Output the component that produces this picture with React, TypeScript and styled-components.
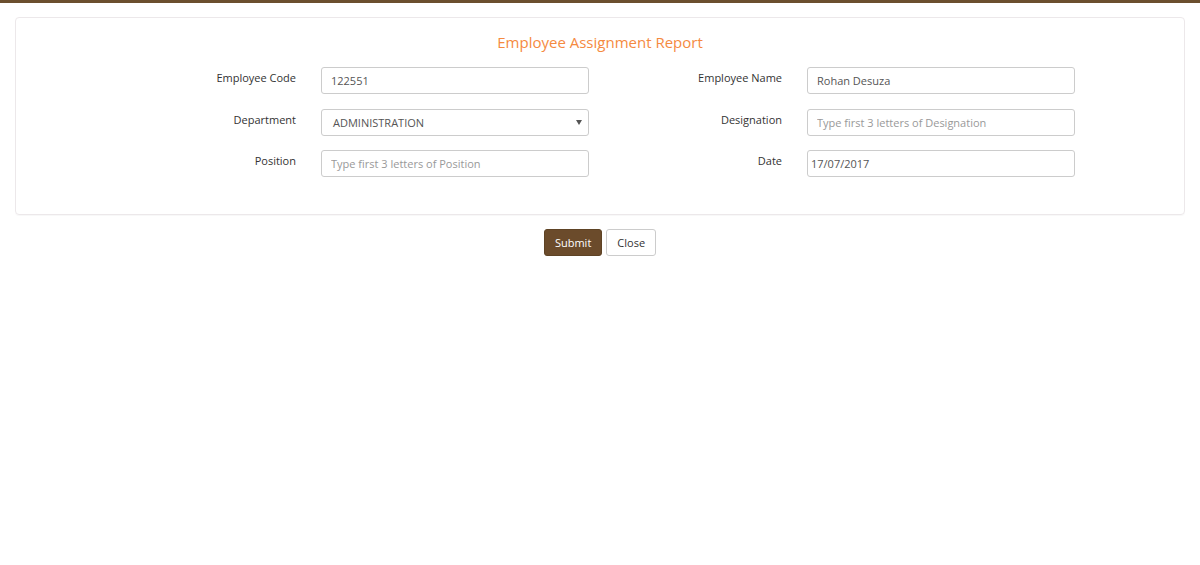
import React from 'react';
import styled, { createGlobalStyle } from 'styled-components';

const GlobalStyle = createGlobalStyle`
  html, body {
    margin: 0;
    padding: 0;
    background: #fff;
    font-family: 'Open Sans', 'Liberation Sans', sans-serif;
    font-size: 11px;
    color: #333;
  }
`;

const TopBar = styled.div`
  height: 3px;
  background-color: #6b4f2e;
`;

const Page = styled.div`
  padding: 14px 15px 0;
`;

const Panel = styled.div`
  border: 1px solid #ece8ea;
  border-radius: 4px;
  box-shadow: 0 1px 1px rgba(0, 0, 0, 0.03);
  padding: 14px 0 37px;
`;

const Title = styled.h3`
  margin: 0 0 15px;
  text-align: center;
  font-size: 15px;
  font-weight: 400;
  line-height: 20px;
  color: #f58a3f;
`;

const FormGrid = styled.div`
  display: grid;
  grid-template-columns: 182px 268px 36px 182px 268px;
  row-gap: 14.5px;
  padding-left: 123px;
`;

const Label = styled.label`
  text-align: right;
  padding: 2px 25px 0 0;
  line-height: 17px;
  color: #333;
`;

const Spacer = styled.div``;

const Input = styled.input<{ $pad?: number }>`
  box-sizing: border-box;
  width: 268px;
  height: 27px;
  padding: 0 ${(p) => p.$pad ?? 9}px;
  border: 1px solid #ccc;
  border-radius: 3px;
  font-family: inherit;
  font-size: 11px;
  color: #555;
  outline: none;
  &::placeholder {
    color: #999;
  }
`;

const SelectBox = styled.div`
  position: relative;
  box-sizing: border-box;
  width: 268px;
  height: 27px;
  border: 1px solid #ccc;
  border-radius: 3px;
  display: flex;
  align-items: center;
  padding: 0 11px;
  color: #555;
`;

const Caret = styled.span`
  position: absolute;
  right: 6px;
  top: 10px;
  width: 0;
  height: 0;
  border-left: 3px solid transparent;
  border-right: 3px solid transparent;
  border-top: 5px solid #555;
`;

const Actions = styled.div`
  display: flex;
  justify-content: center;
  gap: 4px;
  margin-top: 14px;
`;

const Button = styled.button<{ $primary?: boolean }>`
  box-sizing: border-box;
  height: 27px;
  padding: 0 10px;
  border-radius: 3px;
  font-family: inherit;
  font-size: 11px;
  cursor: pointer;
  border: 1px solid ${(p) => (p.$primary ? '#5e4325' : '#ccc')};
  background: ${(p) => (p.$primary ? '#6b4b2b' : '#fff')};
  color: ${(p) => (p.$primary ? '#fff' : '#333')};
`;

export default function App() {
  return (
    <>
      <GlobalStyle />
      <TopBar />
      <Page>
        <Panel>
          <Title>Employee Assignment Report</Title>
          <FormGrid>
            <Label>Employee Code</Label>
            <Input defaultValue="122551" />
            <Spacer />
            <Label>Employee Name</Label>
            <Input defaultValue="Rohan Desuza" />

            <Label>Department</Label>
            <SelectBox>
              ADMINISTRATION
              <Caret />
            </SelectBox>
            <Spacer />
            <Label>Designation</Label>
            <Input placeholder="Type first 3 letters of Designation" />

            <Label>Position</Label>
            <Input placeholder="Type first 3 letters of Position" />
            <Spacer />
            <Label>Date</Label>
            <Input $pad={3} defaultValue="17/07/2017" />
          </FormGrid>
        </Panel>
        <Actions>
          <Button $primary>Submit</Button>
          <Button>Close</Button>
        </Actions>
      </Page>
    </>
  );
}
